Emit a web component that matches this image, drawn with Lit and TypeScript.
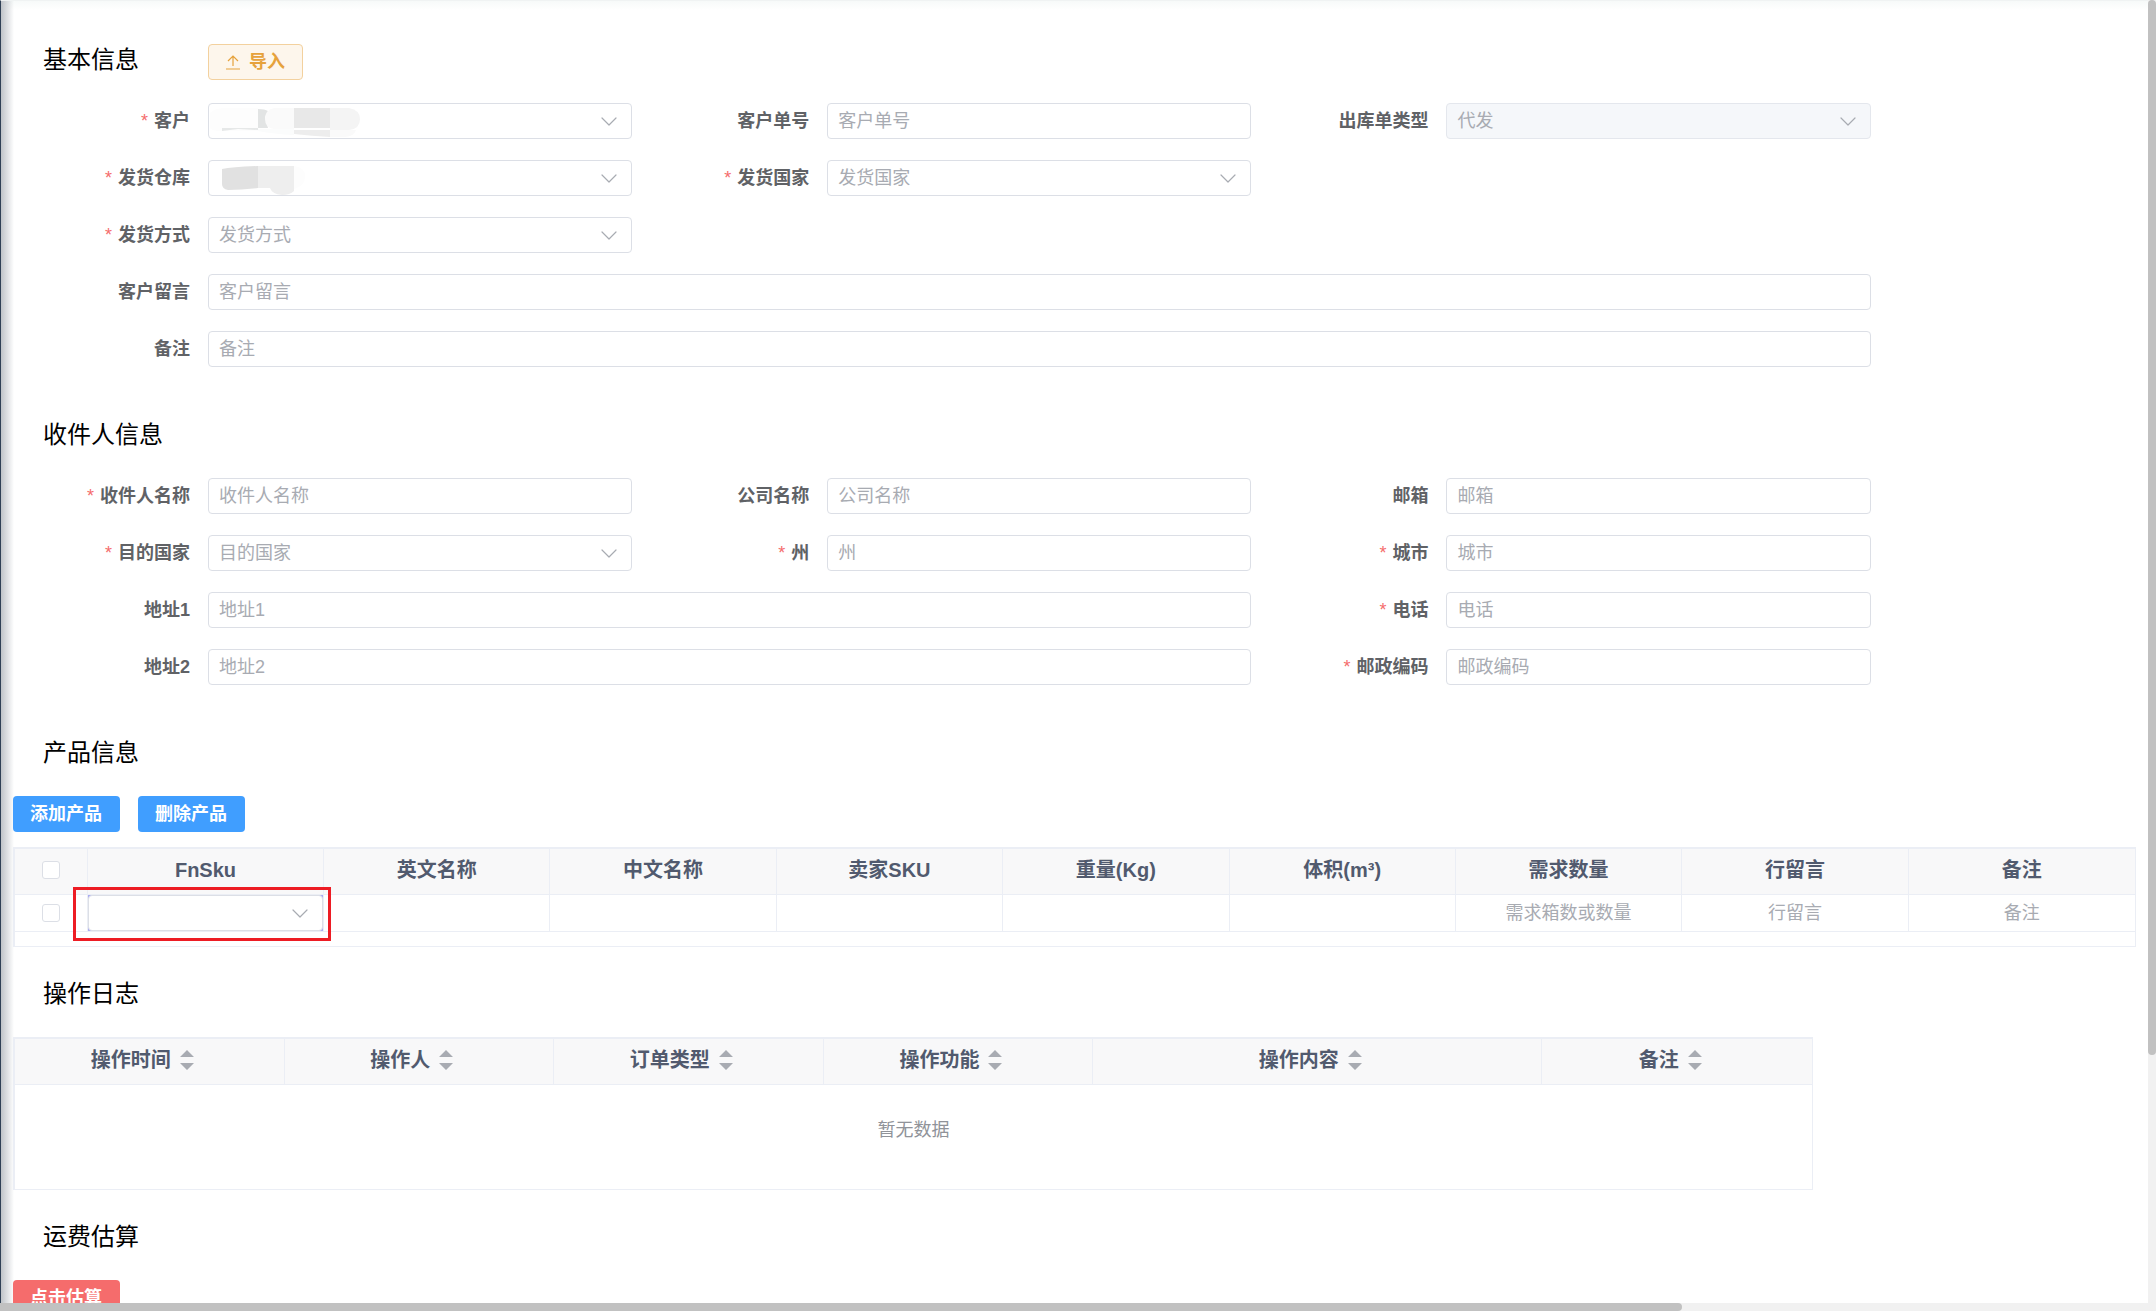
import { LitElement, html, css, svg, nothing } from "lit";
import { customElement } from "lit/decorators.js";
import { classMap } from "lit/directives/class-map.js";

interface Field {
  id: string;
  label: string;
  kind?: "select" | "input";
  required?: boolean;
  disabled?: boolean;
  value?: string;
  masked?: "customer" | "warehouse";
  span?: number;
  start?: boolean;
}

const basicFields: Field[] = [
  { id: "customer", label: "客户", kind: "select", required: true, value: "", masked: "customer" },
  { id: "customer-no", label: "客户单号" },
  { id: "out-type", label: "出库单类型", kind: "select", disabled: true, value: "代发" },
  { id: "warehouse", label: "发货仓库", kind: "select", required: true, value: "", masked: "warehouse" },
  { id: "from-country", label: "发货国家", kind: "select", required: true },
  { id: "ship-method", label: "发货方式", kind: "select", required: true, start: true },
  { id: "message", label: "客户留言", span: 3 },
  { id: "remark", label: "备注", span: 3 },
];

const receiverFields: Field[] = [
  { id: "receiver", label: "收件人名称", required: true },
  { id: "company", label: "公司名称" },
  { id: "email", label: "邮箱" },
  { id: "to-country", label: "目的国家", kind: "select", required: true },
  { id: "state", label: "州", required: true },
  { id: "city", label: "城市", required: true },
  { id: "address1", label: "地址1", span: 2 },
  { id: "phone", label: "电话", required: true },
  { id: "address2", label: "地址2", span: 2 },
  { id: "postcode", label: "邮政编码", required: true },
];

const productColumns = [
  { title: "英文名称" },
  { title: "中文名称" },
  { title: "卖家SKU" },
  { title: "重量(Kg)" },
  { title: "体积(m³)" },
  { title: "需求数量", placeholder: "需求箱数或数量" },
  { title: "行留言", placeholder: "行留言" },
  { title: "备注", placeholder: "备注" },
];

const logColumns = [
  { title: "操作时间", wide: false },
  { title: "操作人", wide: false },
  { title: "订单类型", wide: false },
  { title: "操作功能", wide: false },
  { title: "操作内容", wide: true },
  { title: "备注", wide: false },
];

const chevron = html`<svg class="chevron" viewBox="0 0 16 9" width="16" height="9" aria-hidden="true">
  <path d="M1 1 L8 8 L15 1" fill="none" stroke="#a8abb2" stroke-width="1.2" stroke-linecap="round" stroke-linejoin="round" />
</svg>`;

const masks = {
  customer: svg`
    <path d="M2 10 Q6 5 20 5 H50 V28 H13 Q4 28 2 25 Z" fill="#fdfdfd" />
    <path d="M50 6 Q57 6 60 8 L57 14 L60 25 H50 Z" fill="#e2e4e4" />
    <path d="M14 25 H50 V27 L30 26 L14 28 Z" fill="#e6e8e8" />
    <path d="M50 26 H86 V32 Q66 31 50 28 Z" fill="#fbfcfc" />
    <path d="M86 5 H66 Q57 7 57 16 Q57 25 66 26 H86 Z" fill="#fafafa" />
    <path d="M86 5 H122 V25 H86 Z" fill="#e8e8e8" />
    <path d="M122 5 H141 Q152 7 152 16 Q152 26 141 27 H122 Z" fill="#f4f4f4" />
    <path d="M86 27 H122 V34 Q104 33 86 31 Z" fill="#ededed" />
    <path d="M122 27 H148 Q146 34 136 34 H122 Z" fill="#fafafa" />`,
  warehouse: svg`
    <path d="M14 9 Q24 7 50 6 V28 Q34 30 20 30 Q14 29 14 24 Z" fill="#e1e1e1" />
    <path d="M50 6 H86 V31 Q82 35 74 35 Q64 34 62 28 H50 Z" fill="#eeeeee" />
    <path d="M86 6 Q98 8 97 17 Q97 26 86 29 Z" fill="#fdfdfd" />`,
};

@customElement("app-root")
export class AppRoot extends LitElement {
  static styles = css`
    :host {
      display: block;
      height: 100vh;
      overflow: hidden;
      background: #fff;
      color: #606266;
      font-family: "Liberation Sans", "Noto Sans CJK SC", sans-serif;
      font-size: 18px;
    }
    * { box-sizing: border-box; }
    .shell {
      display: grid;
      grid-template: minmax(0, 1fr) 8px / minmax(0, 1fr) 8px;
      height: 100%;
    }
    .page {
      overflow: hidden;
      padding: 41px 12px 0 12px;
      border-left: 1px solid #304156;
      border-top: 1px solid #f0f3f3;
      background:
        linear-gradient(to right, #c0c4c9, rgba(255, 255, 255, 0) 13px),
        linear-gradient(to bottom, #f7faf9, #fff 9px);
    }
    .track-y, .track-x { background: #f1f1f1; }
    .track-x { grid-column: 1 / 3; }
    .thumb { background: #c1c1c1; }
    .track-y .thumb { height: 81%; border-radius: 4px; }
    .track-x .thumb { width: 78%; height: 100%; border-radius: 0 4px 4px 0; }

    .section { margin-bottom: 29px; }
    .head {
      display: flex;
      justify-content: flex-start;
      height: 38px;
      margin-bottom: 23px;
      padding-left: 30px;
    }
    .title {
      flex: 0 0 165px;
      margin: 0;
      color: #000;
      font-size: 24px;
      font-weight: 400;
      line-height: 36px;
    }
    .btn {
      display: inline-flex;
      align-items: center;
      justify-content: center;
      gap: 8px;
      height: 36px;
      padding: 0 17px 0 16px;
      border: 1px solid transparent;
      border-radius: 4px;
      color: #fff;
      font: inherit;
      font-weight: 700;
      line-height: 18px;
      white-space: nowrap;
    }
    .btn.primary { background: #409eff; }
    .btn.danger { background: #f56c6c; }
    .btn.warning {
      align-self: flex-end;
      border-color: #f3d19e;
      background: #fdf6ec;
      color: #e6a23c;
    }
    .toolbar { display: flex; gap: 18px; margin-bottom: 15px; }

    .form {
      display: grid;
      grid-template-columns: repeat(3, minmax(0, 1fr));
      row-gap: 21px;
      width: 87.5%;
      padding-bottom: 21px;
    }
    .field { display: grid; grid-template-columns: 195px minmax(0, 1fr); }
    .field.start { grid-column-start: 1; }
    .field.span2 { grid-column: span 2; }
    .field.span3 { grid-column: span 3; }
    .label {
      padding-right: 18px;
      font-weight: 700;
      line-height: 36px;
      text-align: right;
    }
    .star { margin-right: 6px; color: #f56c6c; font-weight: 400; }
    .control { display: grid; align-items: center; }
    .control > * { grid-area: 1 / 1; }
    .box {
      width: 100%;
      height: 36px;
      padding: 0 10px;
      border: 1px solid #dcdfe6;
      border-radius: 4px;
      outline: none;
      background: #fff;
      color: #a8abb2;
      font: inherit;
      appearance: none;
    }
    .box::placeholder, .cell-input::placeholder { color: #a8abb2; opacity: 1; }
    .box:disabled { border-color: #e4e7ed; background: #f5f7fa; opacity: 1; }
    .chevron { justify-self: end; margin-right: 15px; pointer-events: none; }
    .mask { justify-self: start; pointer-events: none; }

    .table {
      width: 100%;
      border: 1px solid #ebeef5;
      border-width: 2px 1px 1px 2px;
      border-collapse: separate;
      border-spacing: 0;
      table-layout: fixed;
    }
    .table th {
      height: 46px;
      padding: 0 0 4px;
      border-right: 1px solid #ebeef5;
      border-bottom: 1px solid #ebeef5;
      background: #f8f8f9;
      color: #515a6e;
      font-size: 20px;
      font-weight: 700;
      line-height: 28px;
    }
    .table td {
      height: 37px;
      padding: 0;
      border-right: 1px solid #ebeef5;
      border-bottom: 1px solid #ebeef5;
      text-align: center;
    }
    .table th:last-child, .table td:last-child { border-right: 0; }
    .col-check { width: 73px; }
    .col-sku { width: 236px; }
    .table .spacer { height: 14px; border: 0; }
    .table .empty { height: 104px; padding-bottom: 18px; border: 0; color: #909399; }
    .check {
      display: block;
      width: 18px;
      height: 18px;
      margin: 0 auto;
      border: 1px solid #dcdfe6;
      border-radius: 3px;
      background: #fff;
      appearance: none;
    }
    .cell-input {
      display: block;
      width: 100%;
      height: 36px;
      padding: 0 12px;
      border: 0;
      outline: none;
      background: none;
      font: inherit;
      text-align: center;
    }
    .sku-cell { position: relative; }
    .sku-cell .control { background: #a9abf3; }
    .marker {
      position: absolute;
      inset: -8px -8px -10px -15px;
      border: 3px solid #ed1c24;
      pointer-events: none;
    }
    .log { width: 85%; max-width: 1800px; }
    .log th { padding-right: 14px; }
    .col-wide { width: 25%; }
    .sort {
      display: inline-flex;
      align-items: center;
      gap: 9px;
      padding: 0;
      border: 0;
      background: none;
      color: inherit;
      font: inherit;
    }
  `;

  private field(f: Field) {
    const classes = { field: true, start: !!f.start, span2: f.span === 2, span3: f.span === 3 };
    return html`<div class=${classMap(classes)}>
      <label class="label" for=${f.id}>${f.required ? html`<span class="star">*</span>` : nothing}${f.label}</label>
      <div class="control">
        ${f.kind === "select"
          ? html`<select class="box" id=${f.id} ?disabled=${!!f.disabled}>
                <option>${f.value ?? f.label}</option>
              </select>
              ${f.masked
                ? html`<svg class="mask" viewBox="0 0 160 36" width="160" height="36" aria-hidden="true">${masks[f.masked]}</svg>`
                : nothing}
              ${chevron}`
          : html`<input class="box" id=${f.id} type="text" placeholder=${f.label} />`}
      </div>
    </div>`;
  }

  render() {
    return html`<div class="shell">
      <main class="page">
        <section class="section">
          <div class="head">
            <h2 class="title">基本信息</h2>
            <button class="btn warning" type="button">
              <svg viewBox="0 0 16 16" width="16" height="16" aria-hidden="true">
                <path d="M1 15 H15 M8 12 V2 M3 7 L8 2 L13 7" fill="none" stroke="currentColor" stroke-width="1.2" />
              </svg>
              导入
            </button>
          </div>
          <div class="form">${basicFields.map((f) => this.field(f))}</div>
        </section>

        <section class="section">
          <div class="head"><h2 class="title">收件人信息</h2></div>
          <div class="form">${receiverFields.map((f) => this.field(f))}</div>
        </section>

        <section class="section">
          <div class="head"><h2 class="title">产品信息</h2></div>
          <div class="toolbar">
            <button class="btn primary" type="button">添加产品</button>
            <button class="btn primary" type="button">删除产品</button>
          </div>
          <table class="table">
            <thead>
              <tr>
                <th class="col-check"><input class="check" type="checkbox" aria-label="全选" /></th>
                <th class="col-sku">FnSku</th>
                ${productColumns.map((c) => html`<th>${c.title}</th>`)}
              </tr>
            </thead>
            <tbody>
              <tr>
                <td><input class="check" type="checkbox" aria-label="选择" /></td>
                <td class="sku-cell">
                  <div class="control">
                    <select class="box" aria-label="FnSku"><option></option></select>
                    ${chevron}
                  </div>
                  <div class="marker"></div>
                </td>
                ${productColumns.map(
                  (c) => html`<td>
                    ${c.placeholder
                      ? html`<input class="cell-input" type="text" aria-label=${c.title} placeholder=${c.placeholder} />`
                      : nothing}
                  </td>`,
                )}
              </tr>
              <tr><td class="spacer" colspan="10"></td></tr>
            </tbody>
          </table>
        </section>

        <section class="section">
          <div class="head"><h2 class="title">操作日志</h2></div>
          <table class="table log">
            <thead>
              <tr>
                ${logColumns.map(
                  (c) => html`<th class=${classMap({ "col-wide": c.wide })}>
                    <button class="sort" type="button">
                      ${c.title}
                      <svg viewBox="0 0 14 20" width="14" height="20" aria-hidden="true">
                        <path d="M0 7 L7 0 L14 7 Z M0 13 L7 20 L14 13 Z" fill="#a8abb2" />
                      </svg>
                    </button>
                  </th>`,
                )}
              </tr>
            </thead>
            <tbody>
              <tr><td class="empty" colspan="6">暂无数据</td></tr>
            </tbody>
          </table>
        </section>

        <section class="section">
          <div class="head"><h2 class="title">运费估算</h2></div>
          <div class="toolbar"><button class="btn danger" type="button">点击估算</button></div>
        </section>
      </main>
      <div class="track-y"><div class="thumb"></div></div>
      <div class="track-x"><div class="thumb"></div></div>
    </div>`;
  }
}
